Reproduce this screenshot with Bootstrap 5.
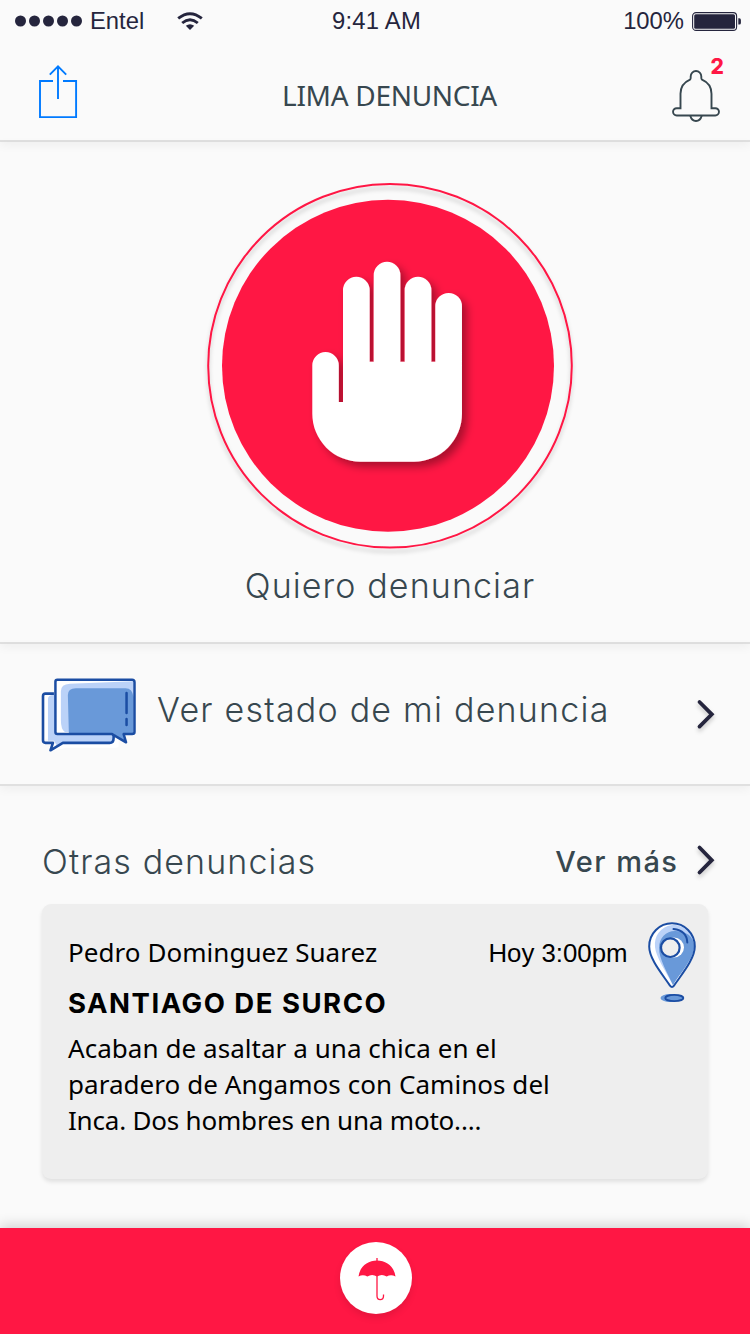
<!DOCTYPE html>
<html lang="es">
<head>
<meta charset="utf-8">
<meta name="viewport" content="width=device-width, initial-scale=1">
<title>Lima Denuncia</title>
<link href="https://cdn.jsdelivr.net/npm/bootstrap@5.3.0/dist/css/bootstrap.min.css" rel="stylesheet">
<style>
  :root { --red: #ff1744; --ink: #37474f; --navy: #25253d; --rule: #e0e0e0; }
  body { background: #fafafa; width: 750px; height: 1334px; overflow: hidden; color: #000; }
  svg { display: block; flex: none; overflow: visible; }
  .status { height: 42px; padding: 0 9px 0 15px; color: var(--navy); font: 23.8px/42px "Liberation Sans", Arial, sans-serif; background: #fafafa; position: relative; z-index: 1; }
  .status > div { flex: 1 1 0; }
  .clock { letter-spacing: .25px; margin-right: 3px; }
  .wifi { margin-right: 129px; }
  .topbar { box-sizing: content-box; height: 76px; padding: 22px 30px 0 37px; color: var(--ink); }
  .ruled { border-bottom: 2px solid var(--rule); box-shadow: 0 3px 10px rgba(0,0,0,.05); position: relative; }
  .brand-title { font: 28px/40px "Noto Sans", sans-serif; letter-spacing: -.3px; margin: 11px 0 0 28px; }
  .geo { font-family: Inter, "Liberation Sans", sans-serif; font-weight: 300; color: var(--ink); white-space: nowrap; }
  .count { position: absolute; left: 38.5px; top: -10px; font: 800 21px/26px Inter, sans-serif; color: var(--red); }
  .hero { height: 502px; padding: 28px 0 0 30px; }
  .hero-label { font-size: 34px; line-height: 44px; letter-spacing: 1.1px; margin-top: 4px; }
  .state-row { height: 142px; padding: 34px 36.500px 0 41px; }
  .state-label { font-size: 34px; line-height: 44px; letter-spacing: 1.23px; margin: 10px 0 0 21px; }
  .others { padding: 54px 36.500px 0 42px; height: 118px; }
  .others-title { font-size: 34px; line-height: 44px; letter-spacing: 1.12px; }
  .more { font-size: 29px; line-height: 44px; font-weight: 500; letter-spacing: 1.500px; }
  .report { margin: 0 42px; height: 275px; padding: 0 12px 0 26px; border: 0; border-radius: 9px; background: #eee; box-shadow: 0 3px 4px rgba(0,0,0,.1); color: #000; }
  .who, .what { font-family: "Noto Sans", sans-serif; font-size: 26px; line-height: 36px; white-space: nowrap; letter-spacing: .05px; }
  .who { margin-top: 30px; }
  .when { font: 25.800px/36px "Liberation Sans", Arial, sans-serif; margin: 31px 20.500px 0 auto; }
  .place { font: 700 27.500px/36px Inter, sans-serif; letter-spacing: 1.500px; margin-top: -18px; }
  .what { margin-top: 9px; }
  .ending { letter-spacing: -.2px; }
  .dock { height: 106px; background: var(--red); box-shadow: 0 -3px 12px rgba(0,0,0,.16); padding: 14px 0 0 2px; }
  .dock-btn { width: 72px; height: 72px; background: #fff; box-shadow: 0 4px 7px rgba(0,0,0,.1); }
</style>
</head>
<body class="d-flex flex-column">
  <div class="status d-flex flex-shrink-0">
    <div class="d-flex align-items-center">
      <svg width="67" height="12" fill="#25253d"><circle cx="5.5" cy="6" r="5.5"/><circle cx="19.5" cy="6" r="5.5"/><circle cx="33.5" cy="6" r="5.5"/><circle cx="47.5" cy="6" r="5.5"/><circle cx="61.5" cy="6" r="5.5"/></svg>
      <span class="ms-2">Entel</span>
      <svg class="wifi ms-auto" width="26" height="18" viewBox="0 0 26 18"><g fill="none" stroke="#25253d" stroke-width="2.9"><path d="M1.2 6.4Q13 -3.1 24.8 6.4"/><path d="M5.2 11Q13 4.6 20.8 11"/></g><path d="M8.8 13.8Q13 10.5 17.2 13.8L13 18Z" fill="#25253d"/></svg>
    </div>
    <span class="clock text-center">9:41 AM</span>
    <div class="d-flex align-items-center justify-content-end">
      <span>100%</span>
      <svg class="ms-2" width="49" height="19"><rect x=".6" y=".6" width="44" height="17.8" rx="3.5" fill="none" stroke="#25253d" stroke-width="1.1"/><rect x="2.2" y="2.2" width="40.8" height="14.6" rx="1.5" fill="#25253d"/><path d="M46.3 6.3h1q1.6 0 1.6 1.6v3q0 1.600-1.600 1.600h-1z" fill="#25253d"/></svg>
    </div>
  </div>

  <header class="topbar ruled d-flex justify-content-between flex-shrink-0">
    <svg width="42" height="56" fill="none" stroke="#007aff" stroke-width="1.900"><path d="M16 17H3v36.100h36.100V17H26M21 35V3M12.800 10.600L21 2.400l8.200 8.200"/></svg>
    <h1 class="brand-title mb-0">LIMA DENUNCIA</h1>
    <div class="position-relative">
      <svg width="48" height="58" viewBox="0 0 48 58" fill="none" stroke="#37474f" stroke-width="1.900"><path d="M18 15.600c1-.7.700-2.200.7-3.300a5.300 5.300 0 0 1 10.600 0c0 1.100-.3 2.600.7 3.300 6 2.600 9.500 7.900 9.500 14.200v14.400h3.800a3.650 3.650 0 0 1 0 7.300H4.700a3.650 3.650 0 0 1 0-7.300h3.800V29.800c0-6.300 3.500-11.600 9.500-14.200z"/><path d="M18.300 51.800c.8 3 3 5.200 5.700 5.200s4.900-2.200 5.700-5.200"/></svg>
      <span class="count">2</span>
    </div>
  </header>

  <section class="hero ruled d-flex flex-column align-items-center flex-shrink-0">
    <svg width="380" height="390" viewBox="0 0 380 390">
      <defs>
        <filter id="ringShadow" x="-5%" y="-5%" width="110%" height="112%"><feDropShadow dx="0" dy="4" stdDeviation="2" flood-opacity=".2"/></filter>
        <filter id="handShadow" x="-10%" y="-10%" width="130%" height="125%"><feDropShadow dx="5" dy="5" stdDeviation="4" flood-color="#000" flood-opacity=".34"/></filter>
      </defs>
      <circle cx="190" cy="195.800" r="181.800" fill="none" stroke="#ff1744" stroke-width="2" filter="url(#ringShadow)"/>
      <circle cx="188" cy="195.800" r="166" fill="#ff1744"/>
      <path filter="url(#handShadow)" fill="#fff" d="M112.300 195.300a13.250 13.250 0 0 1 26.500 0V232H143V120.100a13.330 13.330 0 0 1 26.670 0V191.800H173.700V105.200a13.330 13.330 0 0 1 26.670 0V191.800H204.700V120.100a13.330 13.330 0 0 1 26.670 0V191.800H235.300V136.300a13.330 13.330 0 0 1 26.670 0V243.700a48 48 0 0 1-48 48H160.300a48 48 0 0 1-48-48z"/>
    </svg>
    <div class="geo hero-label">Quiero denunciar</div>
  </section>

  <a class="state-row ruled d-flex text-decoration-none flex-shrink-0" href="#">
    <svg width="95" height="74" viewBox="0 0 95.500 74">
      <path d="M4 15h74v53q0 2-3 2H26L12 73l2-12H4z" fill="#fff"/>
      <path d="M7 21q0-4 6-4h60v48H23l-7 3-3-5H7z" fill="#bbd2f8"/>
      <path d="M13 15.500H4.500q-2.500 0-2.500 2.500v44.500q0 2.500 2.500 2.500H12l-2.500 7.500L22 65h47q4 0 4-5v-4" fill="none" stroke="#1b4da3" stroke-width="2.600" stroke-linejoin="round"/>
      <path d="M16.500 1.500h75q2.500 0 2.500 2.500v50q0 2-2.500 2H83l2.500 8.500L71 56H16.500q-2 0-2-2V3.500q0-2 2-2z" fill="#fff"/>
      <path d="M20 13q0-7 9-7.500l64-2.500v52H82l2 7-13-8H24q-4-2-4-12z" fill="#bbd2f8"/>
      <path d="M27 17q0-7 8-7h50q7 0 8 9v36H82l2 8-13-8H28z" fill="#6999d9"/>
      <path d="M16.500 1.500h75q2.500 0 2.500 2.500v50q0 2-2.500 2H83l2.500 8.500L71 56H16.500q-2 0-2-2V3.500q0-2 2-2zM86 15v20M86 41v6" fill="none" stroke="#1b4da3" stroke-width="2.500" stroke-linejoin="round" stroke-linecap="round"/>
    </svg>
    <span class="geo state-label">Ver estado de mi denuncia</span>
    <svg class="ms-auto" width="17" height="30" style="margin-top:21px"><path d="M2.500 3l12.300 12.300L2.500 27.600" fill="none" stroke="#25253d" stroke-width="3.800" stroke-linecap="round" filter="drop-shadow(0 3px 2px rgba(0,0,0,.2))"/></svg>
  </a>

  <div class="others d-flex flex-shrink-0">
    <h2 class="geo others-title mb-0">Otras denuncias</h2>
    <a class="geo more ms-auto text-decoration-none" href="#">Ver más</a>
    <svg width="17" height="30" style="margin:5px 0 0 18px"><path d="M2.500 2.500l12.300 12.700-12.300 12.300" fill="none" stroke="#25253d" stroke-width="3.800" stroke-linecap="round" filter="drop-shadow(0 3px 2px rgba(0,0,0,.2))"/></svg>
  </div>

  <article class="card report flex-shrink-0">
    <div class="d-flex">
      <div class="who">Pedro Dominguez Suarez</div>
      <div class="when">Hoy 3:00pm</div>
      <svg style="margin-top:18px" width="48" height="81" viewBox="0 0 48 81">
        <path d="M24 1.300C11.500 1.300 1.200 11.500 1.200 24.500c0 12.500 13 27.500 20.800 39.200q2 2.600 4 0C33.800 52 46.800 37 46.800 24.500 46.800 11.500 36.500 1.300 24 1.300z" fill="#fff"/>
        <path d="M24 3C12 5 6 14 7 25c1 10 10 23 18 38 8-13 21-27 21-38.500C46 12 36 2 24 3z" fill="#bbd2f8"/>
        <path d="M27 9c-9 0-16 7-16 17 0 11 8 24 14 37 8-13 21-27 21-38.500C46 14 38 9 27 9z" fill="#6999d9"/>
        <circle cx="26" cy="25.500" r="10" fill="#fff"/><circle cx="22.300" cy="25.700" r="9" fill="#eee"/>
        <g fill="none" stroke="#1b4da3" stroke-width="2" stroke-linecap="round"><path d="M24 1.300C11.500 1.300 1.200 11.500 1.200 24.500c0 12.500 13 27.500 20.800 39.200q2 2.600 4 0C33.800 52 46.800 37 46.800 24.500 46.800 11.500 36.500 1.300 24 1.300z"/><circle cx="22.300" cy="25.700" r="9.300" stroke-width="2.200"/><path d="M25.500 7C34 8 39 13 39.300 20.500"/></g>
        <ellipse cx="22" cy="76" rx="9.500" ry="4" fill="#6999d9"/><ellipse cx="26.300" cy="76" rx="9" ry="3.100" fill="#6999d9" stroke="#1b4da3" stroke-width="1.900"/>
      </svg>
    </div>
    <h3 class="place mb-0">SANTIAGO DE SURCO</h3>
    <p class="what mb-0">Acaban de asaltar a una chica en el<br>paradero de Angamos con Caminos del<br><span class="ending">Inca. Dos hombres en una moto....</span></p>
  </article>

  <nav class="dock mt-auto d-flex justify-content-center flex-shrink-0">
    <a class="dock-btn rounded-circle" href="#" aria-label="Inicio">
      <svg width="72" height="72" viewBox="0 0 72 72"><path d="M18.500 34.500C20 24 28 18.500 37 18.500s17 5.500 18.500 16q-4.500-2.500-8.800 0-4.800-3-9.700 0-4.900-3-9.700 0-4.300-2.500-8.800 0z" fill="#ff1744"/><path d="M37 16v38c0 4.800 6.500 4.800 6.500 0v-1.500" fill="none" stroke="#ff1744" stroke-width="1.300"/></svg>
    </a>
  </nav>
<script src="https://cdn.jsdelivr.net/npm/bootstrap@5.3.0/dist/js/bootstrap.bundle.min.js"></script>
</body>
</html>
